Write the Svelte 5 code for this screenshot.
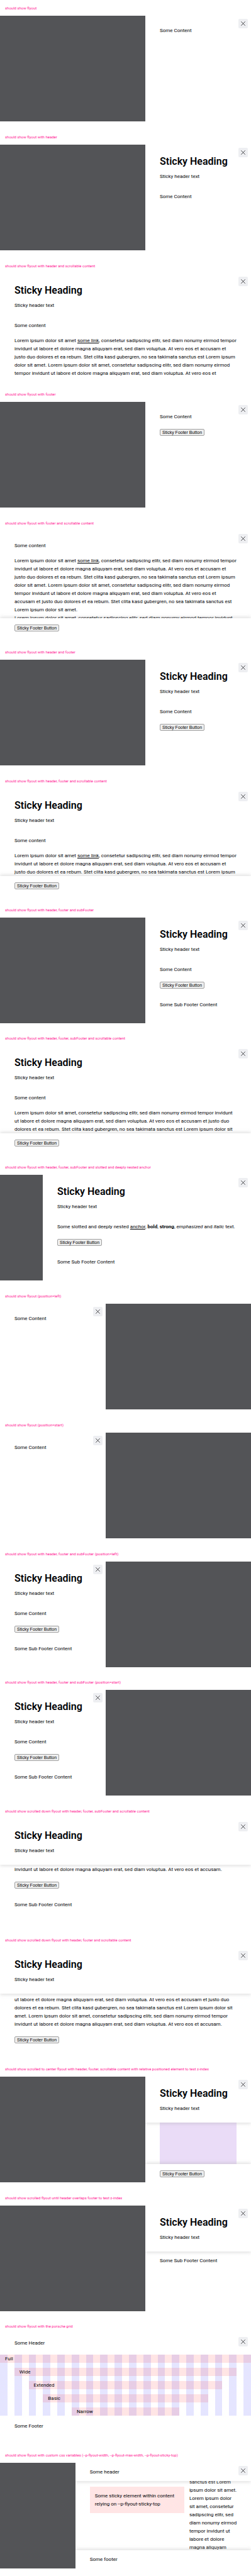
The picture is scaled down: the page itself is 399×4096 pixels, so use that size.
<script>
  const link = 'Lorem ipsum dolor sit amet |some link|, consetetur sadipscing elitr, sed diam nonumy eirmod tempor';
  const longCopy = [
    link,
    'invidunt ut labore et dolore magna aliquyam erat, sed diam voluptua. At vero eos et accusam et',
    'justo duo dolores et ea rebum. Stet clita kasd gubergren, no sea takimata sanctus est Lorem ipsum',
    'dolor sit amet. Lorem ipsum dolor sit amet, consetetur sadipscing elitr, sed diam nonumy eirmod',
    'tempor invidunt ut labore et dolore magna aliquyam erat, sed diam voluptua. At vero eos et',
    'accusam et justo duo dolores et ea rebum. Stet clita kasd gubergren, no sea takimata sanctus est',
    'Lorem ipsum dolor sit amet.',
    'Lorem ipsum dolor sit amet, consetetur sadipscing elitr, sed diam nonumy eirmod tempor invidunt',
  ];
  const plainCopy = [
    'Lorem ipsum dolor sit amet, consetetur sadipscing elitr, sed diam nonumy eirmod tempor invidunt',
    'ut labore et dolore magna aliquyam erat, sed diam voluptua. At vero eos et accusam et justo duo',
    'dolores et ea rebum. Stet clita kasd gubergren, no sea takimata sanctus est Lorem ipsum dolor sit',
    'amet. Lorem ipsum dolor sit amet, consetetur sadipscing elitr, sed diam nonumy eirmod tempor',
    'invidunt ut labore et dolore magna aliquyam erat, sed diam voluptua. At vero eos et accusam.',
  ];
  const sideCopy = [
    'sanctus est Lorem', 'ipsum dolor sit amet.', 'Lorem ipsum dolor', 'sit amet, consetetur',
    'sadipscing elitr, sed', 'diam nonumy eirmod', 'tempor invidunt ut', 'labore et dolore', 'magna aliquyam',
  ];
  const columns = Array.from({ length: 18 }, (_, i) => i + 1);
  const bands = ['Full', 'Wide', 'Extended', 'Basic', 'Narrow'];

  const stories = [
    { label: 'should show flyout', body: 'short' },
    { label: 'should show flyout with header', header: true, body: 'short' },
    { label: 'should show flyout with header and scrollable content', size: 'full', header: true, body: 'copy', lines: longCopy.slice(0, 6) },
    { label: 'should show flyout with footer', body: 'short', footer: true },
    { label: 'should show flyout with footer and scrollable content', size: 'full', body: 'copy', lines: longCopy, footer: true, stuck: true },
    { label: 'should show flyout with header and footer', header: true, body: 'short', footer: true },
    { label: 'should show flyout with header, footer and scrollable content', size: 'full', header: true, body: 'copy', lines: longCopy.slice(0, 3), footer: true, stuck: true },
    { label: 'should show flyout with header, footer and subFooter', header: true, body: 'short', footer: true, sub: true },
    { label: 'should show flyout with header, footer, subFooter and scrollable content', size: 'full', header: true, body: 'copy', lines: plainCopy.slice(0, 3), footer: true, stuck: true },
    { label: 'should show flyout with header, footer, subFooter and slotted and deeply nested anchor', size: 'wide', header: true, body: 'rich', footer: true, sub: true },
    { label: 'should show flyout (position=left)', start: true, body: 'short' },
    { label: 'should show flyout (position=start)', start: true, body: 'short' },
    { label: 'should show flyout with header, footer and subFooter (position=left)', start: true, header: true, body: 'short', footer: true, sub: true },
    { label: 'should show flyout with header, footer and subFooter (position=start)', start: true, header: true, body: 'short', footer: true, sub: true },
    { label: 'should show scrolled down flyout with header, footer, subFooter and scrollable content', size: 'full', header: true, scrolled: true, lines: plainCopy.slice(4), footer: true, sub: true },
    { label: 'should show scrolled down flyout with header, footer and scrollable content', size: 'full', header: true, scrolled: true, lines: plainCopy, footer: true },
    { label: 'should show scrolled to center flyout with header, footer, scrollable content with relative positioned element to test z-index', header: true, raised: true, body: 'block', footer: true, stuck: true },
    { label: 'should show scrolled flyout until header overlaps footer to test z-index', header: true, raised: true, body: 'past' },
    { label: 'should show flyout with the porsche grid', size: 'full', body: 'grid' },
    { label: 'should show flyout with custom css variables (--p-flyout-width, --p-flyout-max-width, --p-flyout-sticky-top)', size: 'custom', body: 'custom' },
  ];
</script>

{#snippet copy(lines)}
  <p class="copy">
    {#each lines as line}
      {@const parts = line.split('|')}
      <span>{parts[0]}{#if parts.length > 1}<a href="#some-link">{parts[1]}</a>{parts[2]}{/if}</span>
    {/each}
  </p>
{/snippet}

{#snippet foot(story)}
  {#if story.footer}
    <footer class:stuck={story.stuck} class:last={story.scrolled && !story.sub}>
      <button type="button" class="action">Sticky Footer Button</button>
    </footer>
  {/if}
  {#if story.sub}
    <div class="sub">Some Sub Footer Content</div>
  {/if}
{/snippet}

<main>
  {#each stories as story}
    <section class="story">
      <h1>{story.label}</h1>
      <div class="stage" class:start={story.start}>
        <div class="flyout {story.size ?? ''}">
          <button type="button" class="close" aria-label="Dismiss flyout">
            <svg viewBox="0 0 28 28" aria-hidden="true"><path d="M8 8 20 20M20 8 8 20" /></svg>
          </button>

          {#if story.header}
            <header class:raised={story.raised || story.scrolled}>
              <h2>Sticky Heading</h2>
              <p>Sticky header text</p>
            </header>
          {/if}

          {#if story.scrolled}
            <div class="scroller end">
              <div class="content">{@render copy(story.lines)}</div>
              {@render foot(story)}
            </div>
          {:else if story.body === 'short' || story.body === 'rich'}
            <div class="content" class:top={!story.header}>
              {#if story.body === 'rich'}
                <p class="line">Some slotted and deeply nested <a href="#anchor">anchor</a>, <b>bold</b>, <strong>strong</strong>, <em>emphasized</em> and <i>italic</i> text.</p>
              {:else}
                <p class="line">Some Content</p>
              {/if}
            </div>
            {@render foot(story)}
          {:else if story.body === 'copy'}
            <div class="scroller">
              <div class="content" class:top={!story.header}>
                <p class="intro">Some content</p>
                {@render copy(story.lines)}
              </div>
            </div>
            {@render foot(story)}
          {:else if story.body === 'block'}
            <div class="block"></div>
            {@render foot(story)}
          {:else if story.body === 'past'}
            <div class="sub past">Some Sub Footer Content</div>
          {:else if story.body === 'grid'}
            <header class="compact">Some Header</header>
            <div class="grid">
              {#each columns as n}
                <div class="column" style="grid-column: {n}"></div>
              {/each}
              {#each bands as band}
                <div class="band {band.toLowerCase()}">{band}</div>
              {/each}
            </div>
            <footer class="compact">Some Footer</footer>
          {:else}
            <header class="compact raised">Some header</header>
            <div class="split">
              <div class="note">Some sticky element within content<br />relying on --p-flyout-sticky-top</div>
              {@render copy(sideCopy)}
            </div>
            <footer class="compact stuck">Some footer</footer>
          {/if}
        </div>
      </div>
    </section>
  {/each}
</main>

<style>
  :global(body) {
    margin: 0;
    background: #fff;
  }

  main {
    display: grid;
    grid-auto-rows: 1fr;
    min-height: 100vh;
    font: 8px/13px Roboto, 'Liberation Sans', sans-serif;
    color: #010205;
  }

  p,
  h1,
  h2 {
    margin: 0;
  }

  a {
    color: inherit;
    text-decoration: underline;
  }

  h1 {
    padding: 0 8px;
    font-size: 6px;
    font-weight: 400;
    line-height: 25px;
    white-space: nowrap;
    color: #ff1493;
  }

  .stage {
    display: flex;
    justify-content: flex-end;
    height: 168px;
    background: #535457;
  }

  .stage.start {
    justify-content: flex-start;
  }

  .flyout {
    position: relative;
    display: flex;
    flex-direction: column;
    box-sizing: border-box;
    width: 168px;
    max-width: 100%;
    overflow: hidden;
    background: #fff;
    white-space: nowrap;
  }

  .flyout.full {
    width: 100%;
  }

  .flyout.wide {
    width: 331px;
  }

  .flyout.custom {
    width: 70%;
  }

  .close {
    position: absolute;
    z-index: 3;
    top: 5px;
    right: 5px;
    width: 15px;
    height: 15px;
    padding: 0;
    border: 0;
    border-radius: 2px;
    background: #eeeff2;
  }

  .close svg {
    display: block;
    width: 100%;
  }

  .close path {
    fill: none;
    stroke: #010205;
    stroke-width: 1.3;
  }

  header,
  footer {
    position: relative;
    z-index: 2;
    flex: none;
    background: #fff;
  }

  header {
    padding: 17px 23px 16px;
  }

  header h2 {
    margin-bottom: 8px;
    font-size: 16px;
    font-weight: 600;
    line-height: 19px;
  }

  .raised {
    box-shadow: 0 2px 5px rgba(160, 160, 160, 0.3);
  }

  footer {
    padding: 10px 23px 8px;
  }

  footer.stuck {
    margin-top: auto;
    box-shadow: 0 -2px 5px rgba(160, 160, 160, 0.3);
  }

  footer.last {
    padding-bottom: 16px;
  }

  .compact {
    padding: 8px 23px;
  }

  .action {
    display: block;
    box-sizing: border-box;
    height: 11px;
    padding: 0 3px;
    border: 1px solid #a0a0a0;
    border-radius: 2px;
    background: #efefef;
    color: #000;
    font: 7px/9px 'Liberation Sans', Arial, sans-serif;
  }

  .content {
    padding: 3px 23px;
  }

  .content.top {
    padding-top: 17px;
  }

  .intro {
    margin-bottom: 11px;
  }

  .copy span {
    display: block;
  }

  .scroller {
    display: flex;
    flex: 1;
    flex-direction: column;
    min-height: 0;
    overflow: hidden;
  }

  .scroller.end {
    justify-content: flex-end;
  }

  .sub {
    padding: 11px 23px 25px;
  }

  .sub.past {
    padding-top: 8px;
  }

  .block {
    flex: 1;
    margin: 0 23px;
    background: #eadcf7;
  }

  .grid {
    display: grid;
    grid-template-columns: repeat(18, 1fr);
    grid-template-rows: repeat(5, 13px);
    gap: 8px 11px;
    margin: 4px 0 2px;
  }

  .column {
    grid-row: 1 / -1;
    background: rgba(0, 0, 255, 0.1);
  }

  .band {
    padding-left: 8px;
    background: rgba(255, 0, 0, 0.1);
  }

  .full.band {
    grid-area: 1 / 1 / auto / -1;
  }

  .wide.band {
    grid-area: 2 / 2 / auto / -2;
  }

  .extended {
    grid-area: 3 / 3 / auto / -3;
  }

  .basic {
    grid-area: 4 / 4 / auto / -4;
  }

  .narrow {
    grid-area: 5 / 6 / auto / -6;
  }

  .split {
    display: grid;
    flex: 1;
    grid-template-columns: minmax(0, 2fr) minmax(0, 1fr);
    grid-template-rows: 100%;
    gap: 8px;
    min-height: 0;
    padding: 0 23px;
  }

  .split .copy {
    display: flex;
    flex-direction: column;
    justify-content: center;
    padding-bottom: 3px;
  }

  .note {
    align-self: start;
    margin-top: 9px;
    padding: 8px;
    background: #ffe5e5;
  }
</style>
